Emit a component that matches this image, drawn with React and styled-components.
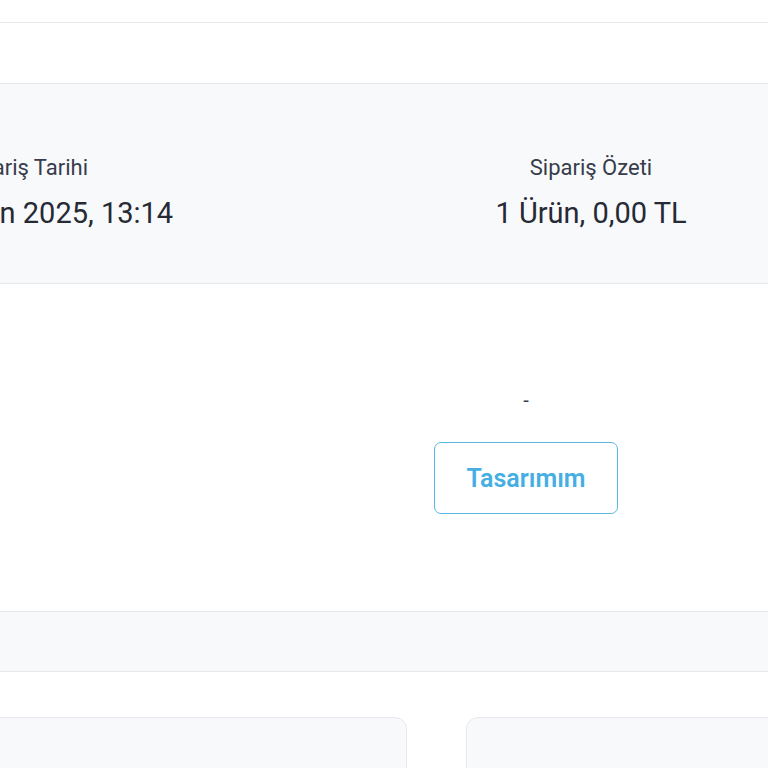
import styled, { createGlobalStyle } from 'styled-components';

const GlobalStyle = createGlobalStyle`
    html, body {
        margin: 0;
        padding: 0;
        background: #ffffff;
        font-family: Roboto, "Noto Sans", Arial, sans-serif;
        color: #2d3240;
        overflow: hidden;
    }
`;

const Page = styled.div`
    width: 768px;
    height: 768px;
    overflow: hidden;
    display: flex;
    flex-direction: column;
`;

const Band = styled.div`
    height: ${p => p.$h}px;
    flex-shrink: 0;
    background: ${p => (p.$gray ? '#f8f9fb' : '#ffffff')};
    border-bottom: 1px solid #e6e8ec;
`;

const SummaryHeader = styled.div`
    flex-shrink: 0;
    height: 200px;
    background: #f8f9fb;
    border-bottom: 1px solid #e6e8ec;
    display: flex;
    margin-left: -258px;
    padding-top: 71px;
    box-sizing: border-box;
`;

const SummaryCol = styled.div`
    width: 566px;
    flex-shrink: 0;
    display: flex;
    flex-direction: column;
    align-items: center;
    gap: 15px;
`;

const Label = styled.div`
    font-size: 22px;
    line-height: 26px;
    color: #373c4b;
`;

const Value = styled.div`
    font-size: 29px;
    line-height: 34px;
    color: #262a35;
    white-space: nowrap;
`;

const OrderBody = styled.div`
    flex-shrink: 0;
    height: 328px;
    border-bottom: 1px solid #e6e8ec;
    box-sizing: border-box;
    display: grid;
    grid-template-columns: 434px 184px 1fr;
    padding-top: 105px;
`;

const ActionCol = styled.div`
    grid-column: 2;
    display: flex;
    flex-direction: column;
    align-items: center;
    gap: 31px;
`;

const Dash = styled.div`
    font-size: 20px;
    line-height: 22px;
    color: #373c4b;
`;

const OutlineButton = styled.button`
    width: 184px;
    height: 72px;
    border: 1.5px solid #5ab7e2;
    border-radius: 7px;
    background: #ffffff;
    color: #45afe3;
    font-family: Roboto, "Noto Sans", Arial, sans-serif;
    font-size: 25px;
    font-weight: 600;
    cursor: pointer;
`;

const CardRow = styled.div`
    display: flex;
    gap: 59px;
    padding-top: 45px;
    margin-left: -21px;
`;

const Card = styled.div`
    width: 428px;
    height: 120px;
    flex-shrink: 0;
    background: #f8f9fb;
    border: 1px solid #e6e8ec;
    border-radius: 12px;
    box-sizing: border-box;
`;

export default function App() {
    return (
        <Page>
            <GlobalStyle />
            <Band $h={22} />
            <Band $h={60} />
            <SummaryHeader>
                <SummaryCol>
                    <Label>Sipariş Tarihi</Label>
                    <Value>24 Haziran 2025, 13:14</Value>
                </SummaryCol>
                <SummaryCol>
                    <Label>Sipariş Özeti</Label>
                    <Value>1 Ürün, 0,00 TL</Value>
                </SummaryCol>
            </SummaryHeader>
            <OrderBody>
                <ActionCol>
                    <Dash>-</Dash>
                    <OutlineButton>Tasarımım</OutlineButton>
                </ActionCol>
            </OrderBody>
            <Band $h={59} $gray />
            <CardRow>
                <Card />
                <Card />
            </CardRow>
        </Page>
    );
}
